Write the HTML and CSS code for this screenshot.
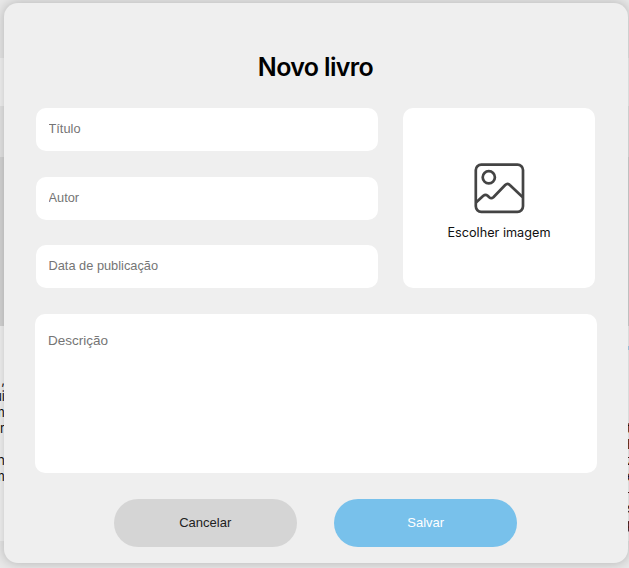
FILE: index.html
```html
<!DOCTYPE html>
<html lang="pt-BR">
<head>
<meta charset="utf-8">
<title>Novo livro</title>
<link rel="stylesheet" href="styles.css">
</head>
<body>
<div class="page">
  <div class="band band-top"></div>
  <div class="band band-nav"></div>
  <div class="band band-header"></div>
  <div class="band band-cover"></div>
  <div class="band band-text">
    <div class="excerpt excerpt-left"><span>,</span><span>ui</span><span>m</span><span>r</span><span></span><span>n</span><span>m</span></div>
    <div class="excerpt excerpt-right"><i class="link"></i><span>t</span><span>E</span><span>z</span><span>e</span><span>-</span><span>s</span><span>p</span></div>
  </div>
  <div class="band band-bottom"></div>
</div>
<form class="modal">
  <h1 class="title">Novo livro</h1>
  <div class="top">
    <div class="fields">
      <input class="field" type="text" placeholder="Título">
      <input class="field" type="text" placeholder="Autor">
      <input class="field" type="text" placeholder="Data de publicação">
    </div>
    <div class="picker">
      <svg class="picture" viewBox="0 0 50 50" fill="none" stroke="#444" stroke-width="2.7" stroke-linejoin="round">
        <rect x="1.8" y="1.6" width="47.200" height="47.200" rx="5.5"/>
        <circle cx="14.8" cy="14.3" r="6.1"/>
        <path d="M2 39.5L9.300 32.700Q11.500 31 13.700 32.700L15.200 34.200Q17.300 36 19.400 34.200L31.200 22Q33.500 19.700 35.800 22L48.500 34"/>
      </svg>
      <span class="picker-label">Escolher imagem</span>
    </div>
  </div>
  <textarea class="description" placeholder="Descrição"></textarea>
  <div class="actions">
    <button class="button cancel" type="button">Cancelar</button>
    <button class="button save" type="button">Salvar</button>
  </div>
</form>
</body>
</html>
```
FILE: styles.css
```css
* { box-sizing: border-box; }
body {
  margin: 0;
  width: 629px;
  height: 568px;
  overflow: hidden;
  font-family: Inter, sans-serif;
}
.page {
  display: grid;
  grid-template-rows: 58px 48px 51px 169px 215px 27px;
  height: 568px;
}
.band-top { background: #e8e8e8; }
.band-nav { background: #f4f4f4; }
.band-header { background: #e6e6e6; }
.band-cover { background: #d6d6d6; }
.band-text {
  display: flex;
  justify-content: space-between;
  background: #f4f4f4;
}
.band-bottom { background: #e8e8e8; }
.excerpt {
  display: flex;
  flex-direction: column;
  font-size: 13px;
  line-height: 16px;
  color: #111;
}
.excerpt span { height: 16px; }
.excerpt-left {
  width: 5px;
  padding-top: 46px;
  align-items: flex-end;
}
.excerpt-right {
  width: 2px;
  padding-top: 20px;
  overflow: hidden;
}
.link {
  height: 4px;
  margin-bottom: 70px;
  background: #a9d3ee;
}
.modal {
  position: absolute;
  left: 4px;
  top: 3px;
  width: 624px;
  height: 559.500px;
  padding: 47px 32px 0 31px;
  border-radius: 14px;
  background: #efefef;
  box-shadow: 0 0 12px rgba(0, 0, 0, .23);
}
.title {
  margin: 0 0 23px;
  font-size: 25px;
  line-height: 35px;
  font-weight: 600;
  letter-spacing: -.65px;
  text-align: center;
}
.top {
  display: flex;
  gap: 25px;
  margin: 0 1px 25.500px;
}
.fields {
  display: grid;
  grid-template-rows: repeat(3, 43px);
  gap: 25.500px;
  width: 342px;
}
.field, .description {
  border: 0;
  outline: 0;
  border-radius: 10px;
  background: #fff;
  font: 12.800px "Liberation Sans", Arial, sans-serif;
}
.field { padding: 0 12.500px 2px; width: 100%; }
.field::placeholder, .description::placeholder { color: #757575; }
.picker {
  display: flex;
  flex-direction: column;
  align-items: center;
  width: 192px;
  height: 180px;
  padding-top: 55px;
  border-radius: 10px;
  background: #fff;
}
.picture { width: 50px; height: 50px; overflow: visible; }
.picker-label {
  margin-top: 11px;
  font-size: 12.700px;
  line-height: 18px;
  color: #111;
}
.description {
  display: block;
  width: 561.500px;
  height: 159.500px;
  padding: 19.500px 13px;
  resize: none;
  font-size: 13.500px;
}
.actions {
  display: flex;
  justify-content: center;
  gap: 37.500px;
  margin-top: 26px;
}
.button {
  width: 183px;
  height: 48px;
  border: 0;
  border-radius: 24px;
  padding-bottom: 2px;
  font: 13px "Liberation Sans", Arial, sans-serif;
}
.cancel { background: #d5d5d5; color: #222; }
.save { background: #78c1eb; color: #fff; }
```
